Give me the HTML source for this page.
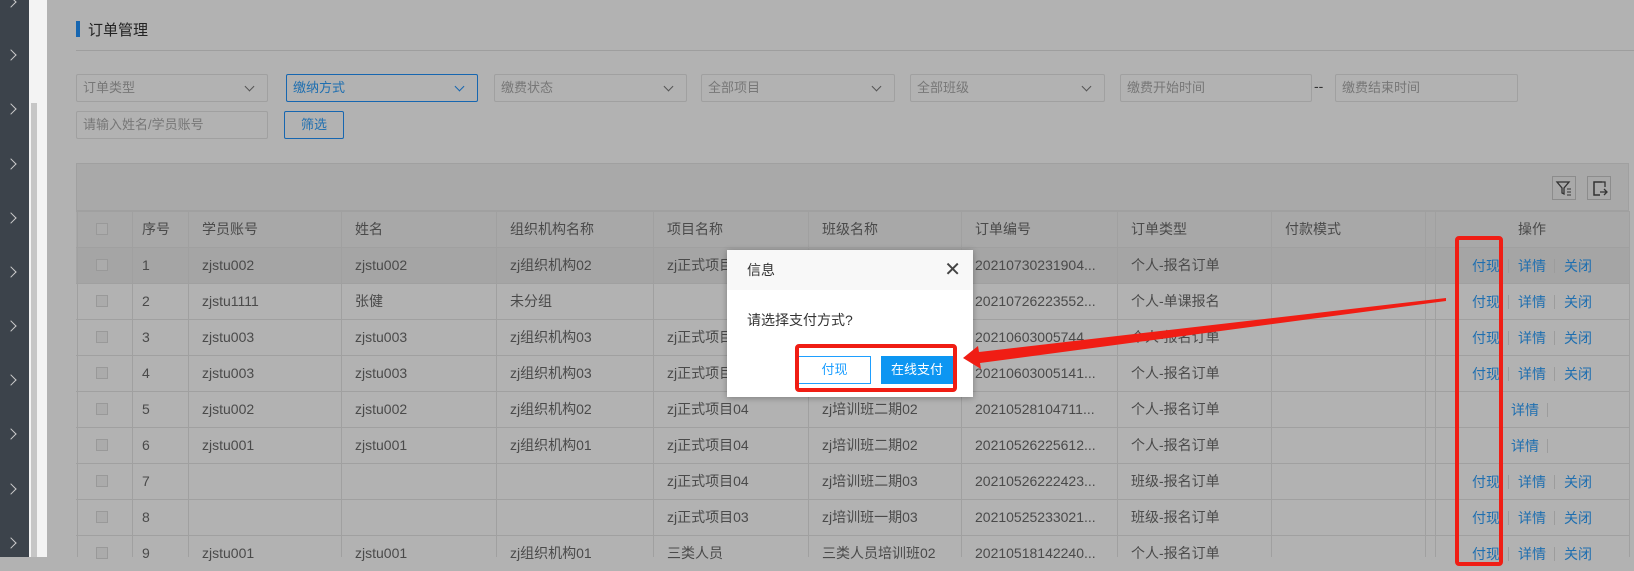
<!DOCTYPE html>
<html><head><meta charset="utf-8"><style>
*{margin:0;padding:0;box-sizing:border-box}
body{width:1634px;height:557px;overflow:hidden;background:#b2b2b2;font-family:"Liberation Sans","Noto Sans CJK SC",sans-serif;font-size:14px;color:#4a4a4a;position:relative}
.a{position:absolute}
.side{left:0;top:0;width:29px;height:557px;background:#3c434b}
.chev{position:absolute;left:7px;width:8px;height:8px;border-right:1.5px solid #ccc;border-top:1.5px solid #ccc;transform:rotate(45deg)}
.strip{left:29px;top:0;width:18px;height:557px;background:#f3f3f3}
.sel{border:1px solid #a0a0a0;border-radius:2px;height:28px;top:74px;color:#777;font-size:13px;padding-left:6px;line-height:26px}
.sel i{position:absolute;right:14px;top:8px;width:7px;height:7px;border-right:1.5px solid #555;border-bottom:1.5px solid #555;transform:rotate(45deg)}
.cell{position:absolute;line-height:36px;white-space:nowrap;overflow:hidden}
.hl{position:absolute;height:1px;background:#a0a0a0}
.vl{position:absolute;width:1px;background:#a0a0a0}
.cb{position:absolute;left:96px;width:12px;height:12px;border:1px solid #999;background:#ababab}
.lk{color:#1f6fb0;position:absolute}
.sp{position:absolute;width:1px;height:14px;background:#9c9c9c}
</style></head><body>
<div class="a side">
<div class="chev" style="top:-2px"></div><div class="chev" style="top:51px"></div><div class="chev" style="top:105px"></div><div class="chev" style="top:160px"></div><div class="chev" style="top:214px"></div><div class="chev" style="top:268px"></div><div class="chev" style="top:322px"></div><div class="chev" style="top:376px"></div><div class="chev" style="top:430px"></div><div class="chev" style="top:485px"></div><div class="chev" style="top:539px"></div>
</div>
<div class="a strip"><div class="a" style="left:2px;top:103px;width:6px;height:454px;background:#c6c6c6"></div></div>

<div class="a" style="left:76px;top:21px;width:4px;height:16px;background:#1766b0"></div>
<div class="a" style="left:88px;top:19px;font-size:15px;color:#222">订单管理</div>
<div class="a" style="left:76px;top:50px;width:1558px;height:1px;background:#9e9e9e"></div>

<div class="a sel" style="left:76px;width:192px">订单类型<i></i></div>
<div class="a sel" style="left:286px;width:192px;border-color:#1766b0;color:#1f6fb0">缴纳方式<i style="border-color:#1766b0"></i></div>
<div class="a sel" style="left:494px;width:193px">缴费状态<i></i></div>
<div class="a sel" style="left:701px;width:194px">全部项目<i></i></div>
<div class="a sel" style="left:910px;width:195px">全部班级<i></i></div>
<div class="a sel" style="left:1120px;width:192px">缴费开始时间</div>
<div class="a" style="left:1314px;top:78px;color:#333">--</div>
<div class="a sel" style="left:1335px;width:183px">缴费结束时间</div>
<div class="a sel" style="left:76px;top:111px;width:192px">请输入姓名/学员账号</div>
<div class="a" style="left:284px;top:111px;width:60px;height:28px;border:1px solid #1766b0;border-radius:2px;color:#1f6fb0;font-size:13px;text-align:center;line-height:26px">筛选</div>

<div class="a" style="left:76px;top:163px;width:1553px;height:48px;background:#a9a9a9;border:1px solid #a0a0a0"></div>
<div class="a" style="left:1552px;top:176px;width:24px;height:24px;border:1px solid #8c8c8c"><svg width="22" height="22"><path d="M4 5h12l-5 6v6l-2-1v-5z" fill="none" stroke="#333" stroke-width="1.3"/><path d="M14 12h4M14 15h4M14 18h4" stroke="#333"/></svg></div>
<div class="a" style="left:1587px;top:176px;width:24px;height:24px;border:1px solid #8c8c8c"><svg width="22" height="22"><path d="M14 5H6v13h6M6 5v13" fill="none" stroke="#333" stroke-width="1.5"/><path d="M14 5h3v5M12 15h7M16 12l3 3-3 3" fill="none" stroke="#333" stroke-width="1.3"/></svg></div>
<div class="a" style="left:76px;top:211px;width:1553px;height:36px;background:#a8a8a8"></div>
<div class="a" style="left:76px;top:247px;width:1553px;height:36px;background:#a5a5a5"></div>
<div id="tb"></div>

<div class="a" style="left:727px;top:250px;width:246px;height:147px;background:#fff;box-shadow:0 1px 6px rgba(0,0,0,.3)">
<div style="height:40px;background:#f8f8f8;padding:0 0 0 20px;line-height:40px;color:#333">信息<span style="position:absolute;right:12px;top:0;font-size:20px;color:#444">✕</span></div>
<div style="position:absolute;left:20px;top:60px;color:#333">请选择支付方式?</div>
<div style="position:absolute;left:71px;top:106px;width:73px;height:28px;border:1px solid #1e9fff;color:#1e9fff;text-align:center;line-height:26px;font-size:13px">付现</div>
<div style="position:absolute;left:154px;top:106px;width:72px;height:28px;background:#0d96f2;color:#fff;text-align:center;line-height:28px;font-size:13px">在线支付</div>
</div>
<div class="a" style="left:795px;top:344px;width:162px;height:48px;border:4px solid #f01d14;border-radius:4px"></div>
<div class="a" style="left:1455px;top:236px;width:48px;height:330px;border:4px solid #f01d14;border-radius:4px"></div>
<svg class="a" style="left:0;top:0" width="1634" height="557"><polygon points="1446,298 1446,301 980,363 981,369 963,358 978,346 979,352" fill="#f01d14"/></svg>

<script>
var cols=[77,132,188,341,496,653,808,961,1117,1271,1425,1435,1629];
var hdr=["序号","学员账号","姓名","组织机构名称","项目名称","班级名称","订单编号","订单类型","付款模式"];
var rows=[
["1","zjstu002","zjstu002","zj组织机构02","zj正式项目04","zj培训班二期02","20210730231904...","个人-报名订单",3],
["2","zjstu1111","张健","未分组","","","20210726223552...","个人-单课报名",3],
["3","zjstu003","zjstu003","zj组织机构03","zj正式项目04","zj培训班二期02","20210603005744...","个人-报名订单",3],
["4","zjstu003","zjstu003","zj组织机构03","zj正式项目04","zj培训班二期02","20210603005141...","个人-报名订单",3],
["5","zjstu002","zjstu002","zj组织机构02","zj正式项目04","zj培训班二期02","20210528104711...","个人-报名订单",1],
["6","zjstu001","zjstu001","zj组织机构01","zj正式项目04","zj培训班二期02","20210526225612...","个人-报名订单",1],
["7","","","","zj正式项目04","zj培训班二期03","20210526222423...","班级-报名订单",3],
["8","","","","zj正式项目03","zj培训班一期03","20210525233021...","班级-报名订单",3],
["9","zjstu001","zjstu001","zj组织机构01","三类人员","三类人员培训班02","20210518142240...","个人-报名订单",3]];
var h='';
for(var i=0;i<10;i++){h+='<div class="hl" style="left:76px;width:1553px;top:'+(211+36*i)+'px"></div>';}
for(var c=0;c<cols.length;c++){h+='<div class="vl" style="left:'+cols[c]+'px;top:211px;height:346px"></div>';}
function row(y,data){
 h+='<div class="cb" style="top:'+(y+12)+'px"></div>';
 for(var k=1;k<=data.length;k++){var t=data[k-1]||'';if(t)h+='<div class="cell" style="left:'+(cols[k]+ (k==1?10:14))+'px;top:'+y+'px;width:'+(cols[k+1]-cols[k]-16)+'px">'+t+'</div>';}
}
row(211,hdr);
h+='<div class="cell" style="left:1518px;top:211px">操作</div>';
for(var r=0;r<rows.length;r++){var y=247+36*r;row(y,rows[r].slice(0,8));
 var ty=y+9;
 if(rows[r][8]==3){h+='<span class="lk" style="left:1472px;top:'+ty+'px">付现</span><div class="sp" style="left:1508px;top:'+(ty+3)+'px"></div><span class="lk" style="left:1518px;top:'+ty+'px">详情</span><div class="sp" style="left:1554px;top:'+(ty+3)+'px"></div><span class="lk" style="left:1564px;top:'+ty+'px">关闭</span>';}
 else{h+='<span class="lk" style="left:1511px;top:'+ty+'px">详情</span><div class="sp" style="left:1547px;top:'+(ty+3)+'px"></div>';}
}
document.getElementById('tb').outerHTML=h;
</script>
</body></html>
